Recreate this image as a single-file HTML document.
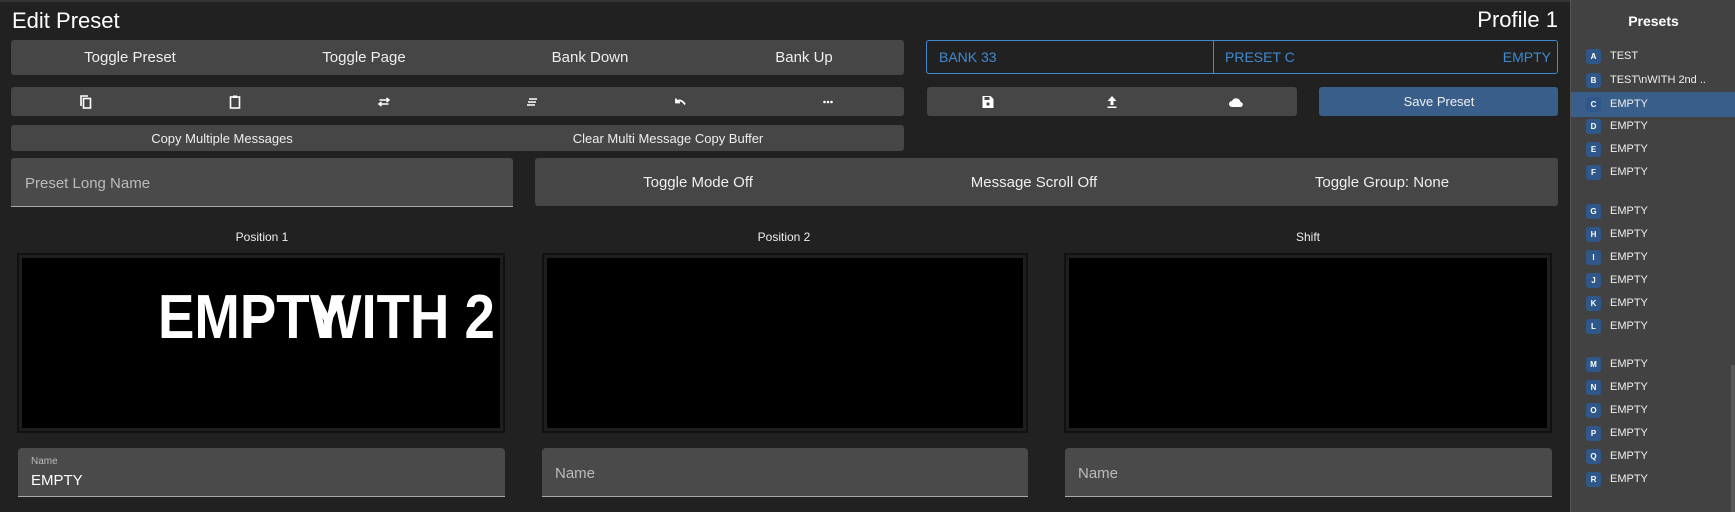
<!DOCTYPE html>
<html><head><meta charset="utf-8"><style>
*{box-sizing:border-box;margin:0;padding:0}
body{width:1735px;height:512px;background:#212121;font-family:"Liberation Sans",sans-serif;color:#eee;position:relative;overflow:hidden}
.a{position:absolute}
.btn{position:absolute;background:#464646;border-radius:3px}
.t{position:absolute;transform:translateX(-50%);white-space:nowrap;font-size:15px;color:#eee}
.ic{position:absolute;transform:translate(-50%,-50%)}
.disp{position:absolute;background:#000;border:2px solid #111;box-shadow:inset 0 0 0 3px #1e1e1e}
.inp{position:absolute;background:#4a4a4a;border-radius:4px 4px 0 0;border-bottom:1px solid #aaa}
.side{position:absolute;left:1570px;top:0;width:165px;height:512px;background:#424242;border-left:1px solid #555}
.it{position:absolute;left:0;width:165px;height:23px;font-size:11px;color:#f0f0f0}
.bd{position:absolute;left:15px;top:4px;width:15px;height:15px;background:#2f5789;border-radius:3px;font-size:8px;font-weight:bold;text-align:center;line-height:15px;color:#fff}
.it span.n{position:absolute;left:39px;top:5px}
</style></head><body>
<div class="a" style="left:0;top:0;width:1570px;height:2px;background:#333"></div>
<div class="a" style="left:12px;top:8px;font-size:22px;color:#fff">Edit Preset</div>
<div class="a" style="right:177px;top:7px;font-size:22px;color:#fff">Profile 1</div>

<div class="btn" style="left:11px;top:40px;width:893px;height:35px"></div>
<div class="t" style="left:130px;top:49px">Toggle Preset</div>
<div class="t" style="left:364px;top:49px">Toggle Page</div>
<div class="t" style="left:590px;top:49px">Bank Down</div>
<div class="t" style="left:804px;top:49px">Bank Up</div>

<div class="btn" style="left:11px;top:87px;width:893px;height:29px"></div>
<svg class="ic" style="left:86px;top:102px" width="12" height="14" viewBox="0 0 12 14"><path d="M1 11V1h7" stroke="#fff" stroke-width="1.6" fill="none"/><rect x="3.5" y="3.5" width="7" height="9.5" stroke="#fff" stroke-width="1.6" fill="none"/></svg>
<svg class="ic" style="left:235px;top:102px" width="11" height="14" viewBox="0 0 11 14"><rect x="1" y="2" width="9" height="11" stroke="#fff" stroke-width="1.6" fill="none"/><rect x="3.5" y="0.5" width="4" height="2.5" fill="#fff"/></svg>
<svg class="ic" style="left:384px;top:102px" width="13" height="10" viewBox="0 0 13 10"><path d="M2 3h9M9 1l2.5 2L9 5M11 7H2M4 5L1.5 7 4 9" stroke="#fff" stroke-width="1.5" fill="none"/></svg>
<svg class="ic" style="left:532px;top:102px" width="12" height="8" viewBox="0 0 12 8"><path d="M3 1h8M2 4h8M1 7h8" stroke="#fff" stroke-width="1.6"/></svg>
<svg class="ic" style="left:680px;top:102px" width="12" height="9" viewBox="0 0 12 9"><path d="M2 1v4h4M2 5C4 2 8 2 11 7" stroke="#fff" stroke-width="1.8" fill="none"/></svg>
<svg class="ic" style="left:828px;top:102px" width="10" height="4" viewBox="0 0 10 4"><circle cx="1.5" cy="2" r="1.3" fill="#fff"/><circle cx="5" cy="2" r="1.3" fill="#fff"/><circle cx="8.5" cy="2" r="1.3" fill="#fff"/></svg>

<div class="btn" style="left:11px;top:125px;width:893px;height:26px"></div>
<div class="t" style="left:222px;top:131px;font-size:13px">Copy Multiple Messages</div>
<div class="t" style="left:668px;top:131px;font-size:13px">Clear Multi Message Copy Buffer</div>

<div class="inp" style="left:11px;top:158px;width:502px;height:49px;border-radius:3px 3px 0 0"></div>
<div class="a" style="left:25px;top:175px;font-size:15px;color:#bbb">Preset Long Name</div>
<div class="btn" style="left:535px;top:158px;width:1023px;height:48px"></div>
<div class="t" style="left:698px;top:174px">Toggle Mode Off</div>
<div class="t" style="left:1034px;top:174px">Message Scroll Off</div>
<div class="t" style="left:1382px;top:174px">Toggle Group: None</div>

<div class="a" style="left:926px;top:40px;width:632px;height:34px;border:1px solid #3f8ad0;border-radius:3px"></div>
<div class="a" style="left:1213px;top:41px;width:1px;height:32px;background:#3f8ad0"></div>
<div class="a" style="left:939px;top:49px;font-size:14px;color:#3f8ad0">BANK 33</div>
<div class="a" style="left:1225px;top:49px;font-size:14px;color:#3f8ad0">PRESET C</div>
<div class="a" style="right:184px;top:49px;font-size:14px;color:#3f8ad0">EMPTY</div>

<div class="btn" style="left:927px;top:87px;width:370px;height:29px"></div>
<svg class="ic" style="left:988px;top:102px" width="11" height="12" viewBox="0 0 11 12"><path d="M0 0h8l3 3v9H0z" fill="#fff"/><rect x="2" y="1" width="5" height="3" fill="#464646"/><circle cx="5.5" cy="8" r="1.6" fill="#464646"/></svg>
<svg class="ic" style="left:1112px;top:102px" width="9" height="12" viewBox="0 0 9 12"><path d="M4.5 0L9 5H6v4H3V5H0z" fill="#fff"/><rect x="0" y="10.5" width="9" height="1.5" fill="#fff"/></svg>
<svg class="ic" style="left:1236px;top:102px" width="14" height="10" viewBox="0 0 14 10"><path d="M3 10a3 3 0 0 1 0-6 4.5 4.5 0 0 1 8.5 1A2.5 2.5 0 0 1 11 10z" fill="#fff"/></svg>
<div class="a" style="left:1319px;top:87px;width:239px;height:29px;background:#3a5e8a;border-radius:3px"></div>
<div class="t" style="left:1439px;top:94px;font-size:13px">Save Preset</div>

<div class="t" style="left:262px;top:230px;font-size:12px">Position 1</div>
<div class="t" style="left:784px;top:230px;font-size:12px">Position 2</div>
<div class="t" style="left:1308px;top:230px;font-size:12px">Shift</div>

<div class="disp" style="left:17px;top:253px;width:488px;height:180px;overflow:hidden">
<div class="a" style="left:139px;top:32px;font-size:62px;font-weight:bold;color:#fff;transform:scaleX(.88);transform-origin:left;line-height:1;white-space:nowrap">EMPTY</div>
<div class="a" style="left:291px;top:32px;font-size:62px;font-weight:bold;color:#fff;transform:scaleX(.88);transform-origin:left;line-height:1;white-space:nowrap">WITH 2</div>
</div>
<div class="disp" style="left:542px;top:253px;width:486px;height:180px"></div>
<div class="disp" style="left:1064px;top:253px;width:488px;height:180px"></div>

<div class="inp" style="left:18px;top:448px;width:487px;height:49px"></div>
<div class="a" style="left:31px;top:456px;font-size:10px;color:#bbb">Name</div>
<div class="a" style="left:31px;top:472px;font-size:15px;color:#fff">EMPTY</div>
<div class="inp" style="left:542px;top:448px;width:486px;height:49px"></div>
<div class="a" style="left:555px;top:465px;font-size:15px;color:#bbb">Name</div>
<div class="inp" style="left:1065px;top:448px;width:487px;height:49px"></div>
<div class="a" style="left:1078px;top:465px;font-size:15px;color:#bbb">Name</div>

<div class="side">
<div class="a" style="left:0;width:165px;top:13px;text-align:center;font-size:14px;font-weight:bold;color:#fff">Presets</div>
<div class="a" style="left:160px;top:365px;width:4px;height:147px;background:#5a5a5a"></div>
<div class="it" style="top:45px"><div class="bd">A</div><span class="n">TEST</span></div>
<div class="it" style="top:69px"><div class="bd">B</div><span class="n">TEST\nWITH 2nd ..</span></div>
<div class="it" style="top:92px;height:25px;background:#3a5e8a"><div class="bd" style="top:5px">C</div><span class="n" style="top:6px">EMPTY</span></div>
<div class="it" style="top:115px"><div class="bd">D</div><span class="n">EMPTY</span></div>
<div class="it" style="top:138px"><div class="bd">E</div><span class="n">EMPTY</span></div>
<div class="it" style="top:161px"><div class="bd">F</div><span class="n">EMPTY</span></div>
<div class="it" style="top:200px"><div class="bd">G</div><span class="n">EMPTY</span></div>
<div class="it" style="top:223px"><div class="bd">H</div><span class="n">EMPTY</span></div>
<div class="it" style="top:246px"><div class="bd">I</div><span class="n">EMPTY</span></div>
<div class="it" style="top:269px"><div class="bd">J</div><span class="n">EMPTY</span></div>
<div class="it" style="top:292px"><div class="bd">K</div><span class="n">EMPTY</span></div>
<div class="it" style="top:315px"><div class="bd">L</div><span class="n">EMPTY</span></div>
<div class="it" style="top:353px"><div class="bd">M</div><span class="n">EMPTY</span></div>
<div class="it" style="top:376px"><div class="bd">N</div><span class="n">EMPTY</span></div>
<div class="it" style="top:399px"><div class="bd">O</div><span class="n">EMPTY</span></div>
<div class="it" style="top:422px"><div class="bd">P</div><span class="n">EMPTY</span></div>
<div class="it" style="top:445px"><div class="bd">Q</div><span class="n">EMPTY</span></div>
<div class="it" style="top:468px"><div class="bd">R</div><span class="n">EMPTY</span></div>
</div>
</body></html>
